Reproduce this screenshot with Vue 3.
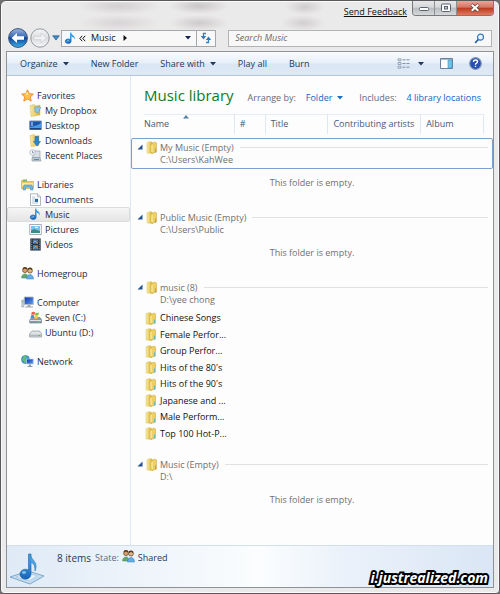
<script setup>
import { ref } from 'vue'

const query = ref('')
const selected = ref('Music')

const navGroups = [
  { label: 'Favorites', icon: 'star', items: [
    { label: 'My Dropbox', icon: 'dropbox' },
    { label: 'Desktop', icon: 'desktop' },
    { label: 'Downloads', icon: 'downloads' },
    { label: 'Recent Places', icon: 'recent' } ] },
  { label: 'Libraries', icon: 'libraries', items: [
    { label: 'Documents', icon: 'document' },
    { label: 'Music', icon: 'note' },
    { label: 'Pictures', icon: 'picture' },
    { label: 'Videos', icon: 'video' } ] },
  { label: 'Homegroup', icon: 'people', items: [] },
  { label: 'Computer', icon: 'computer', items: [
    { label: 'Seven (C:)', icon: 'windrive' },
    { label: 'Ubuntu (D:)', icon: 'drive' } ] },
  { label: 'Network', icon: 'network', items: [] },
]

const columns = ['Name', '#', 'Title', 'Contributing artists', 'Album']

const folders = [
  { title: 'My Music (Empty)', path: 'C:\\Users\\KahWee', focused: true, items: [] },
  { title: 'Public Music (Empty)', path: 'C:\\Users\\Public', items: [] },
  { title: 'music (8)', path: 'D:\\yee chong', items: [
    'Chinese Songs', 'Female Perfor...', 'Group Perfor...', "Hits of the 80's",
    "Hits of the 90's", 'Japanese and ...', 'Male Perform...', 'Top 100 Hot-P...' ] },
  { title: 'Music (Empty)', path: 'D:\\', items: [] },
]
</script>

<template>
  <div class="window">
    <svg class="defs" aria-hidden="true">
      <defs>
        <linearGradient id="gold" x1="0" x2="1"><stop offset="0" stop-color="#f9eda0" /><stop offset="1" stop-color="#d9ae35" /></linearGradient>
        <linearGradient id="orb" x1="0" y1="0" x2="0" y2="1"><stop offset="0" stop-color="#9db9e0" /><stop offset=".45" stop-color="#3565b4" /><stop offset=".5" stop-color="#123f92" /><stop offset="1" stop-color="#35b5f0" /></linearGradient>
        <linearGradient id="glass" x1="0" y1="0" x2="0" y2="1"><stop offset="0" stop-color="#f6f6f6" /><stop offset=".5" stop-color="#dcdee0" /><stop offset="1" stop-color="#f2f4f5" /></linearGradient>
        <linearGradient id="screen" x1="0" y1="0" x2="1" y2="1"><stop offset="0" stop-color="#0a2fa8" /><stop offset="1" stop-color="#5f9ef0" /></linearGradient>
        <linearGradient id="blue" x1="0" y1="0" x2="0" y2="1"><stop offset="0" stop-color="#5bb4f0" /><stop offset="1" stop-color="#1663b8" /></linearGradient>
      </defs>
      <symbol id="folder" viewBox="0 0 12 13"><path d="M1 1.500 5 .5l1.500 1v11L1 12z" fill="url(#gold)" stroke="#dfc765" stroke-width=".5" /><path d="m5 3 4-2 1.500 1v9L6 12.500 5 11z" fill="#edcf62" stroke="#c9a037" stroke-width=".5" /><path d="M6 4v7" stroke="#fff3b0" /><path d="M9.500 7.500v4" stroke="#7fb4a4" stroke-width="1.200" /></symbol>
      <symbol id="star" viewBox="0 0 13 13"><path d="m6.500.8 1.700 3.900 4.200.4-3.100 2.800.9 4.200-3.700-2.200-3.700 2.200.9-4.200L.6 5.100l4.200-.4z" fill="#fcc14b" stroke="#e58a25" stroke-width=".9" /><path d="m6.500 3 1 2.600H4z" fill="#fff0a8" /></symbol>
      <symbol id="dropbox" viewBox="0 0 13 13"><path d="M1 1.500 5 .5l2 1.500 4-1v10L2 12.500z" fill="url(#gold)" stroke="#dcb95b" stroke-width=".5" /><path d="m5.500 3.500 2-1 1.500 1 1.500-1 1.500 1.300-1.500 1.400v2.300L8.500 9 6 7.500V5.500z" fill="#8ac7e8" stroke="#4a93c8" stroke-width=".5" /></symbol>
      <symbol id="desktop" viewBox="0 0 13 13"><path d="M.7 2h11.600v8.500H.7z" fill="#1d55ab" stroke="#7292b5" /><path d="M1 8c4-1 7-1 11-4v5H1z" fill="#4b9be0" /><path d="M2 4h2M2 6h2" stroke="#cfe7ff" /><path d="M1 10h11" stroke="#1d3556" /></symbol>
      <symbol id="downloads" viewBox="0 0 13 13"><path d="M1 1.500 5 .5l2 1.500 3-.5v10L2 12.500z" fill="url(#gold)" stroke="#dcb95b" stroke-width=".5" /><path d="M6 2.500h3.500v5h2L8 12 4.500 7.500H6z" fill="#208ade" stroke="#1263ad" stroke-width=".5" /></symbol>
      <symbol id="recent" viewBox="0 0 13 13"><path d="M4 2h7v7H4z" fill="#d8dfe5" stroke="#8f9ba5" stroke-width=".7" /><path d="M3 8.500h8l1 3.500H3z" fill="#bbc7cf" stroke="#8996a0" stroke-width=".6" /><path d="M5 10.500h5" stroke="#3b9acb" /><circle cx="3.500" cy="3.500" r="2.800" fill="#f5f8fa" stroke="#a4adb3" stroke-width=".7" /><path d="M3.500 1.800v2h1.500" stroke="#557" stroke-width=".6" fill="none" /></symbol>
      <symbol id="libraries" viewBox="0 0 13 13"><path d="M.5 2.500h4l1 1h7v7H.5z" fill="#ecc85f" stroke="#d0a541" stroke-width=".6" /><path d="M2 1.500h4v2H2z" fill="#75b56b" /><path d="M1 5h11v3H1z" fill="#fae9a4" /><path d="M3 7h8l1 5H9.500V9h-5v3H2z" fill="#6cbce6" stroke="#378ac0" stroke-width=".5" /></symbol>
      <symbol id="document" viewBox="0 0 13 13"><path d="M1.500.8h7l3 3v8.700h-10z" fill="#fff" stroke="#9aa4ad" stroke-width=".8" /><path d="M8.500.8v3h3" fill="#dfe7ec" stroke="#9aa4ad" stroke-width=".7" /><path d="M3 4h3M3 6h6M3 8h3M3 10h6" stroke="#9db4c6" stroke-width=".8" /><path d="M6 6h3v3H6z" fill="#2a6aac" /></symbol>
      <symbol id="note" viewBox="0 0 13 13"><path d="M7.500.5v8.700A3.300 2.600 0 1 1 6 7V.5z" fill="url(#blue)" /><path d="M6.800.5c0 2.600 5 2.500 4 7.300C10.500 5.300 8.500 5 6.800 4z" fill="#2d9ce4" /><path d="M2.500 9.500q1-1 2.500-.7" stroke="#9edcff" fill="none" stroke-width=".8" /></symbol>
      <symbol id="picture" viewBox="0 0 13 13"><path d="M.7 1.500h11.600v10H.7z" fill="#fff" stroke="#8c9aa5" stroke-width=".8" /><path d="M2 3h9v7H2z" fill="#78c4ec" /><path d="M2 7.500 5 6l6 2v2H2z" fill="#3e8a88" /><path d="m6 4 3 .5" stroke="#fff" /></symbol>
      <symbol id="video" viewBox="0 0 13 13"><path d="M1.500.7h10v11.600h-10z" fill="#25303e" stroke="#536070" stroke-width=".6" /><path d="M4 1.500h5v4.300H4zM4 7h5v4.500H4z" fill="#4a7fb0" /><path d="m4 5 2-2 3 2.500M4 11l3-3 2 2.500" stroke="#b99b70" fill="none" /><path d="M2.700 1.500v10M10.300 1.500v10" stroke="#b9c2ca" stroke-dasharray="1 1.200" stroke-width=".8" /></symbol>
      <symbol id="people" viewBox="0 0 13 13"><circle cx="4" cy="3.200" r="2.400" fill="#d9a16c" stroke="#634020" stroke-width=".7" /><circle cx="9" cy="3.700" r="2.400" fill="#e2b382" stroke="#544026" stroke-width=".7" /><path d="M.6 11c0-5 5.900-5.500 6.700-1v1z" fill="#61a96c" stroke="#3a8050" stroke-width=".5" /><path d="M5.500 12c0-5.500 6.500-6 7-.5v.5z" fill="#66aee2" stroke="#377cb8" stroke-width=".5" /><path d="M2 2q2-2.500 4 0M7 2.500Q9 0 11 2.500" stroke="#573817" stroke-width="1.300" fill="none" /></symbol>
      <symbol id="homegroup" viewBox="0 0 13 13"><use href="#people" /></symbol>
      <symbol id="computer" viewBox="0 0 13 13"><path d="M.8 4h2v7h-2z" fill="#d4dbe0" stroke="#8b969f" stroke-width=".6" /><path d="M3.300 1h9v7.500h-9z" fill="url(#screen)" stroke="#b0bac5" stroke-width=".9" /><path d="M6.500 9h3v1.500H12v1H4v-1h2.500z" fill="#9da8b3" /><path d="M1.200 6h1" stroke="#4bbd53" /></symbol>
      <symbol id="windrive" viewBox="0 0 13 13"><path d="m2 7.500 1-1h8l1.500 2V12H.7V9z" fill="#8999a5" stroke="#5a6873" stroke-width=".5" /><path d="M1 9.500h11" stroke="#dbe4e9" /><path d="M9.500 11h1.500" stroke="#4fe05d" /><path d="M2.700 1.200q2-1 3.300 0L5.500 4q-1.500-1-3.300 0z" fill="#ed603b" /><path d="M6.500 1.500q1.500.8 3.500 0L9.300 4.300q-1.800.8-3.300 0z" fill="#7cc144" /><path d="M2 4.500q2-1 3.300 0L4.800 7.300q-1.500-1-3.300 0z" fill="#3f91dd" /><path d="M5.900 4.800q1.500.8 3.300 0l-.7 2.800q-1.800.8-3.200 0z" fill="#fac83d" /></symbol>
      <symbol id="drive" viewBox="0 0 13 13"><path d="m2.500 5.500 1-.5h6l1.500.5 1.500 2V11H.6V8z" fill="#dfe3e5" stroke="#8a9196" stroke-width=".7" /><path d="M1 8.500h11v2H1z" fill="#b3babf" /><path d="M9.500 9.500h1.500" stroke="#42c44c" /></symbol>
      <symbol id="network" viewBox="0 0 13 13"><circle cx="4.500" cy="4.500" r="4" fill="#35a2dc" stroke="#1b71ad" stroke-width=".6" /><path d="M2 2q2-2 4-1L4 4l2 2-2 2Q2 5 1 5z" fill="#64bd70" /><path d="M5.500 4h6.800v5H5.500z" fill="url(#screen)" stroke="#c2ccd8" stroke-width=".8" /><path d="M8 9.500h2v1.500h1.500v1h-5v-1H8z" fill="#8998ab" /></symbol>
    </svg>

    <header class="titlebar">
      <div class="caption">
        <a class="feedback" href="#">Send Feedback</a>
        <div class="caption-buttons">
          <button class="cap" aria-label="Minimize"><svg width="12" height="12" viewBox="0 0 12 12"><rect x="1.500" y="5.500" width="9" height="3" rx="1" fill="#fff" stroke="#596270" /></svg></button>
          <button class="cap" aria-label="Maximize"><svg width="12" height="12" viewBox="0 0 12 12"><rect x="1.500" y="2" width="9" height="7.500" rx="1" fill="#fff" stroke="#596270" /><rect x="4.500" y="4.500" width="3" height="2.500" fill="#c9cdd2" stroke="#596270" /></svg></button>
          <button class="cap close" aria-label="Close"><svg width="12" height="12" viewBox="0 0 12 12"><path d="m2.500 2.500 7 6.500M9.500 2.500l-7 6.500" stroke="#703734" stroke-width="3.600" /><path d="m2.700 2.700 6.600 6.100M9.300 2.700 2.700 8.800" stroke="#fff" stroke-width="2" /></svg></button>
        </div>
      </div>
      <div class="address-row">
        <div class="travel">
          <button class="plain" aria-label="Back"><svg width="20" height="20" viewBox="0 0 20 20"><circle cx="10" cy="10" r="9.400" fill="url(#orb)" stroke="#3b5278" /><path d="m3.500 10 5.500-5v3.300h7v3.400H9V15z" fill="#fff" /></svg></button>
          <button class="plain" aria-label="Forward"><svg width="20" height="20" viewBox="0 0 20 20"><circle cx="10" cy="10" r="9.200" fill="url(#glass)" stroke="#9198a0" /><path d="m16.500 10-5.500-5v3.300H4v3.400h7V15z" fill="#f1f2f3" stroke="#c9cdd1" stroke-width=".7" /></svg></button>
          <button class="plain" aria-label="Recent pages"><svg width="8" height="6" viewBox="0 0 8 6"><path d="M.7.800h6.600L4 5z" fill="#3f90c8" stroke="#28557e" stroke-width=".7" /></svg></button>
        </div>
        <div class="address">
          <svg width="13" height="13"><use href="#note" /></svg>
          <svg class="chev" width="7" height="7" viewBox="0 0 7 7"><path d="M3.200.8.8 3.500l2.400 2.700M6.200.8 3.800 3.500l2.400 2.700" fill="none" stroke="#111" /></svg>
          <span class="crumb">Music</span>
          <svg width="5" height="6" viewBox="0 0 5 6"><path d="M.5 0v6L4 3z" fill="#111" /></svg>
          <button class="plain drop" aria-label="Previous locations"><svg width="6" height="4" viewBox="0 0 6 4"><path d="M0 0h6L3 3.500z" fill="#14264d" /></svg></button>
          <button class="plain refresh" aria-label="Refresh"><svg width="12" height="12" viewBox="0 0 12 12"><path d="M6 1.500H3.500V5M6 10.500h2.500V7" fill="none" stroke="#2f83cb" stroke-width="1.300" /><path d="M.8 4h5.400L3.500 7.500zM5.800 8h5.400L8.500 4.500z" fill="#2b78bf" /></svg></button>
        </div>
        <label class="search">
          <input v-model="query" type="search" placeholder="Search Music" aria-label="Search Music">
          <svg width="11" height="11" viewBox="0 0 11 11"><circle cx="6.500" cy="4.200" r="3" fill="#eaf5fc" stroke="#3679bb" stroke-width="1.200" /><path d="M4.300 6.500 1.200 9.800" stroke="#2c5fa3" stroke-width="1.700" /></svg>
        </label>
      </div>
    </header>

    <main class="client">
      <div class="toolbar">
        <button class="tool">Organize <svg width="6" height="4" viewBox="0 0 6 4"><path d="M0 0h6L3 3.500z" fill="#1e395b" /></svg></button>
        <button class="tool">New Folder</button>
        <button class="tool">Share with <svg width="6" height="4" viewBox="0 0 6 4"><path d="M0 0h6L3 3.500z" fill="#1e395b" /></svg></button>
        <button class="tool">Play all</button>
        <button class="tool">Burn</button>
        <div class="tool-right">
          <button class="plain views" aria-label="Change your view">
            <svg width="13" height="11" viewBox="0 0 13 11"><path d="M1 .8h3v2H1zM1 4.500h3v2H1zM1 8.200h3v2H1z" fill="#d9e3ee" stroke="#8190a8" stroke-width=".7" /><path d="M5.500 1.800h3m1 0h3M5.500 5.500h3m1 0h3M5.500 9.200h3m1 0h3" stroke="#8090a6" /></svg>
            <svg width="6" height="4" viewBox="0 0 6 4"><path d="M0 0h6L3 3.500z" fill="#1e395b" /></svg>
          </button>
          <button class="plain" aria-label="Preview pane"><svg width="13" height="11" viewBox="0 0 13 11"><path d="M.5.500h12v10H.5z" fill="#fff" stroke="#6a829d" /><path d="M1 1.500h11" stroke="#a9bdd0" /><path d="M8 2h4v8H8z" fill="#6fc5e8" stroke="#4a92b8" stroke-width=".6" /></svg></button>
          <button class="plain" aria-label="Help"><svg width="13" height="13" viewBox="0 0 13 13"><circle cx="6.500" cy="6.500" r="5.800" fill="#2451b1" stroke="#8291b3" stroke-width="1.200" /><path d="M4.500 5q0-2 2-2t2 1.700q0 1-1.200 1.600-.8.4-.8 1.400M6.500 8.700V10" fill="none" stroke="#fff" stroke-width="1.400" /></svg></button>
        </div>
      </div>

      <div class="panes">
        <nav class="nav">
          <section v-for="g in navGroups" :key="g.label">
            <a class="nav-head" href="#"><svg width="13" height="13"><use :href="'#' + g.icon" /></svg>{{ g.label }}</a>
            <a v-for="i in g.items" :key="i.label" href="#" class="nav-item" :class="{ selected: i.label === selected }" @click.prevent="selected = i.label">
              <svg width="13" height="13"><use :href="'#' + i.icon" /></svg>{{ i.label }}
            </a>
          </section>
        </nav>

        <div class="content">
          <div class="library">
            <h1>Music library</h1>
            <span>Arrange by:</span>
            <button class="plain link">Folder <svg width="6" height="4" viewBox="0 0 6 4"><path d="M0 0h6L3 3.500z" fill="#1c6fc4" /></svg></button>
            <span class="includes">Includes:</span>
            <a class="link" href="#">4 library locations</a>
          </div>
          <div class="columns">
            <button v-for="c in columns" :key="c" class="col">
              {{ c }}
              <svg v-if="c === 'Name'" class="sort" width="6" height="4" viewBox="0 0 6 4"><path d="M3 0 0 3.500h6z" fill="#57829f" /></svg>
            </button>
          </div>

          <section v-for="(f, n) in folders" :key="n" class="group">
            <div class="group-head" :class="{ focused: f.focused }">
              <svg class="twist" width="6" height="6" viewBox="0 0 6 6"><path d="M5.500.5v5h-5z" fill="#26528f" /></svg>
              <svg class="ficon" width="12" height="13"><use href="#folder" /></svg>
              <div class="group-text">
                <h2>{{ f.title }}</h2>
                <p>{{ f.path }}</p>
              </div>
            </div>
            <ul v-if="f.items.length" class="files">
              <li v-for="i in f.items" :key="i"><svg width="12" height="13"><use href="#folder" /></svg>{{ i }}</li>
            </ul>
            <p v-else class="empty">This folder is empty.</p>
          </section>
        </div>
      </div>

      <footer class="details">
        <svg class="big" width="36" height="34" viewBox="0 0 36 34"><path d="m1 25 18-6 16 5-14 8z" fill="#c5dcef" stroke="#7fa9cb" /><path d="m7 25 12-4 9 3-8 5z" fill="#e6f1f9" stroke="#9bbfdb" stroke-width=".6" /><path d="M22 2v20a5.500 5 0 1 1-2.500-4V2z" fill="url(#blue)" stroke="#1b5fa8" stroke-width=".6" /><path d="M21 2c1 6 9 8 5 17 0-7-2-8-5-9z" fill="#4fa4df" stroke="#2a76b8" stroke-width=".6" /><ellipse cx="15" cy="20.500" rx="2" ry="1.300" fill="#8ccbf2" /></svg>
        <span class="count">8 items</span>
        <span class="state">State:</span>
        <svg class="shared" width="13" height="13"><use href="#people" /></svg>
        <span>Shared</span>
        <span class="mark">i.justrealized.com</span>
      </footer>
    </main>
  </div>
</template>

<style>
body { margin: 0; background: #6f7072; }
</style>

<style scoped>
* { box-sizing: border-box; }
.window {
  min-height: 100vh;
  display: flex;
  flex-direction: column;
  padding: 0 5px 5px;
  border: 1px solid #59595b;
  border-radius: 6px 6px 4px 4px;
  box-shadow: inset 0 0 0 1px #fafafa;
  font-family: "Open Sans", "Noto Sans", sans-serif;
  font-size: 9px;
  line-height: 12px;
  color: #1e2a3c;
  background:
    radial-gradient(ellipse 42px 9px at 118px 5px, #d3cfd2, transparent),
    radial-gradient(ellipse 30px 8px at 198px 5px, #c9c5c8, transparent),
    radial-gradient(ellipse 42px 9px at 118px 22px, #d8d4d7, transparent),
    radial-gradient(ellipse 30px 8px at 198px 22px, #cecacd, transparent),
    radial-gradient(ellipse 20px 8px at 304px 6px, #d0ccce, transparent),
    radial-gradient(ellipse 22px 8px at 302px 22px, #d2ced0, transparent),
    #ebeaea;
}
.defs { position: absolute; width: 0; height: 0; }
h1, h2, p, ul { margin: 0; padding: 0; font-weight: 400; }
a { color: inherit; text-decoration: none; }
svg { display: block; flex: none; }
button { font: inherit; color: inherit; }
.plain { display: flex; align-items: center; padding: 0; border: 0; background: none; }

.caption { display: flex; justify-content: flex-end; align-items: flex-start; height: 25px; }
.feedback { padding: 5px 5px 0 0; color: #111; text-decoration: underline; }
.caption-buttons { display: flex; border: 1px solid #77797c; border-top: 0; border-radius: 0 0 4px 4px; overflow: hidden; }
.cap { width: 22px; height: 14px; padding: 0; display: grid; place-items: center; border: 0; border-right: 1px solid #8d8f92; background: linear-gradient(#e6e7e8, #d5d7d9 45%, #b9bcbf 50%, #d6d8da); }
.cap.close { width: 36px; border: 0; background: linear-gradient(#e7a79a, #d67562 45%, #bf3721 50%, #de7a5b); }

.address-row { display: flex; align-items: center; height: 24px; padding: 0 2px; margin-bottom: 1px; }
.travel { display: flex; align-items: center; gap: 2px; margin-right: 1px; }
.address { display: flex; align-items: center; flex: 158; height: 17px; padding-left: 2px; border: 1px solid #a4a8ac; background: #f8f8f9; color: #111; }
.chev { margin: 0 5px 0 2px; }
.crumb { margin-right: 7px; }
.drop { margin-left: auto; padding: 0 5px; height: 100%; }
.refresh { height: 100%; padding: 0 3px; border-left: 1px solid #a4a8ac; }
.search { display: flex; align-items: center; flex: 261; height: 17px; margin-left: 12px; padding: 0 6px; border: 1px solid #b2b5b8; background: #f8f8f9; }
.search input { flex: 1; min-width: 0; padding: 0; border: 0; outline: 0; background: none; font: inherit; }
.search input::placeholder { color: #6a6a6a; font-style: italic; opacity: 1; }

.client { display: flex; flex-direction: column; flex: 1; border: 1px solid #8f9296; background: #fdfdfe; }
.toolbar { display: flex; align-items: center; height: 24px; padding-left: 13px; gap: 22px; color: #1e395b; background: linear-gradient(#fafcfe, #e7eff9 48%, #dae6f4 52%, #dfe9f6); border-bottom: 1px solid #b4c4d8; }
.tool { display: flex; align-items: center; gap: 5px; padding: 0; border: 0; background: none; white-space: nowrap; }
.tool-right { display: flex; align-items: center; gap: 16px; margin-left: auto; padding-right: 11px; }
.views { gap: 8px; }

.panes { display: flex; flex: 1; }
.nav { display: flex; flex-direction: column; gap: 14px; width: 124px; padding-top: 12px; border-right: 1px solid #dfe9f5; }
.nav-head, .nav-item { display: flex; align-items: center; height: 15px; gap: 3px; border: 1px solid transparent; border-radius: 2px; white-space: nowrap; }
.nav-head { padding-left: 13px; }
.nav-item { padding-left: 21px; }
.nav-item.selected { border-color: #dcdcdc; background: linear-gradient(#f6f6f6, #e5e5e5); }

.content { flex: 1; min-width: 0; }
.library { display: flex; align-items: baseline; height: 38px; padding: 8px 12px 0 13px; color: #5f6b7b; white-space: nowrap; }
.library h1 { margin-right: 14px; font-size: 15px; line-height: 22px; color: #117a1c; }
.link { color: #1663c7; margin-left: 10px; }
button.link { display: inline-flex; gap: 5px; }
.includes { margin-left: auto; }
.columns { display: grid; grid-template-columns: 91fr 31fr 63fr 93fr 63fr; height: 20px; margin: 0 9px 4px 13px; color: #45597a; background: linear-gradient(#e6edf5, #e6edf5) top / 100% 1px no-repeat; }
.col { position: relative; padding: 0 0 0 5px; border: 0; border-right: 1px solid #dfe8f2; background: none; text-align: left; white-space: nowrap; }
.col:first-child { padding-left: 0; }
.sort { position: absolute; top: 1px; left: 39px; }

.group { margin-bottom: 13px; }
.group-head { display: flex; align-items: flex-start; height: 31px; padding: 2px 4px 0 5px; border: 1px solid transparent; border-radius: 2px; color: #707070; }
.group-head.focused { border-color: #7d9fcb; }
.twist { margin: 3px 3px 0 0; }
.ficon { margin-right: 2px; }
.group-text { flex: 1; }
.group-head h2 { display: flex; align-items: center; gap: 6px; font-size: 9px; height: 13px; }
.group-head h2::after { content: ""; flex: 1; height: 1px; background: #e2e2e2; }
.empty { height: 26px; padding-top: 8px; text-align: center; color: #707070; }
.files { display: grid; grid-auto-rows: 1fr; height: 132px; margin: 1px 0 0 14px; list-style: none; color: #111; }
.files li { display: flex; align-items: center; gap: 3px; }

.details { display: flex; align-items: flex-start; height: 42px; padding: 6px 5px 0 2px; color: #1e395b; background: linear-gradient(90deg, #dfeaf6, #fbfdfe 52%, #eaf1fa 70%, #dae6f5); border-top: 1px solid #d2dfee; }
.big { margin-right: 12px; }
.count { font-size: 10px; margin-right: 4px; }
.state { color: #5a6a7f; margin-right: 3px; }
.shared { margin-right: 3px; margin-top: -2px; }
.mark { align-self: flex-end; margin-left: auto; font-family: "Open Sans", sans-serif; font-size: 14px; font-weight: 700; font-style: italic; line-height: 18px; color: #fff; -webkit-text-stroke: 4px #000; paint-order: stroke fill; }
</style>
